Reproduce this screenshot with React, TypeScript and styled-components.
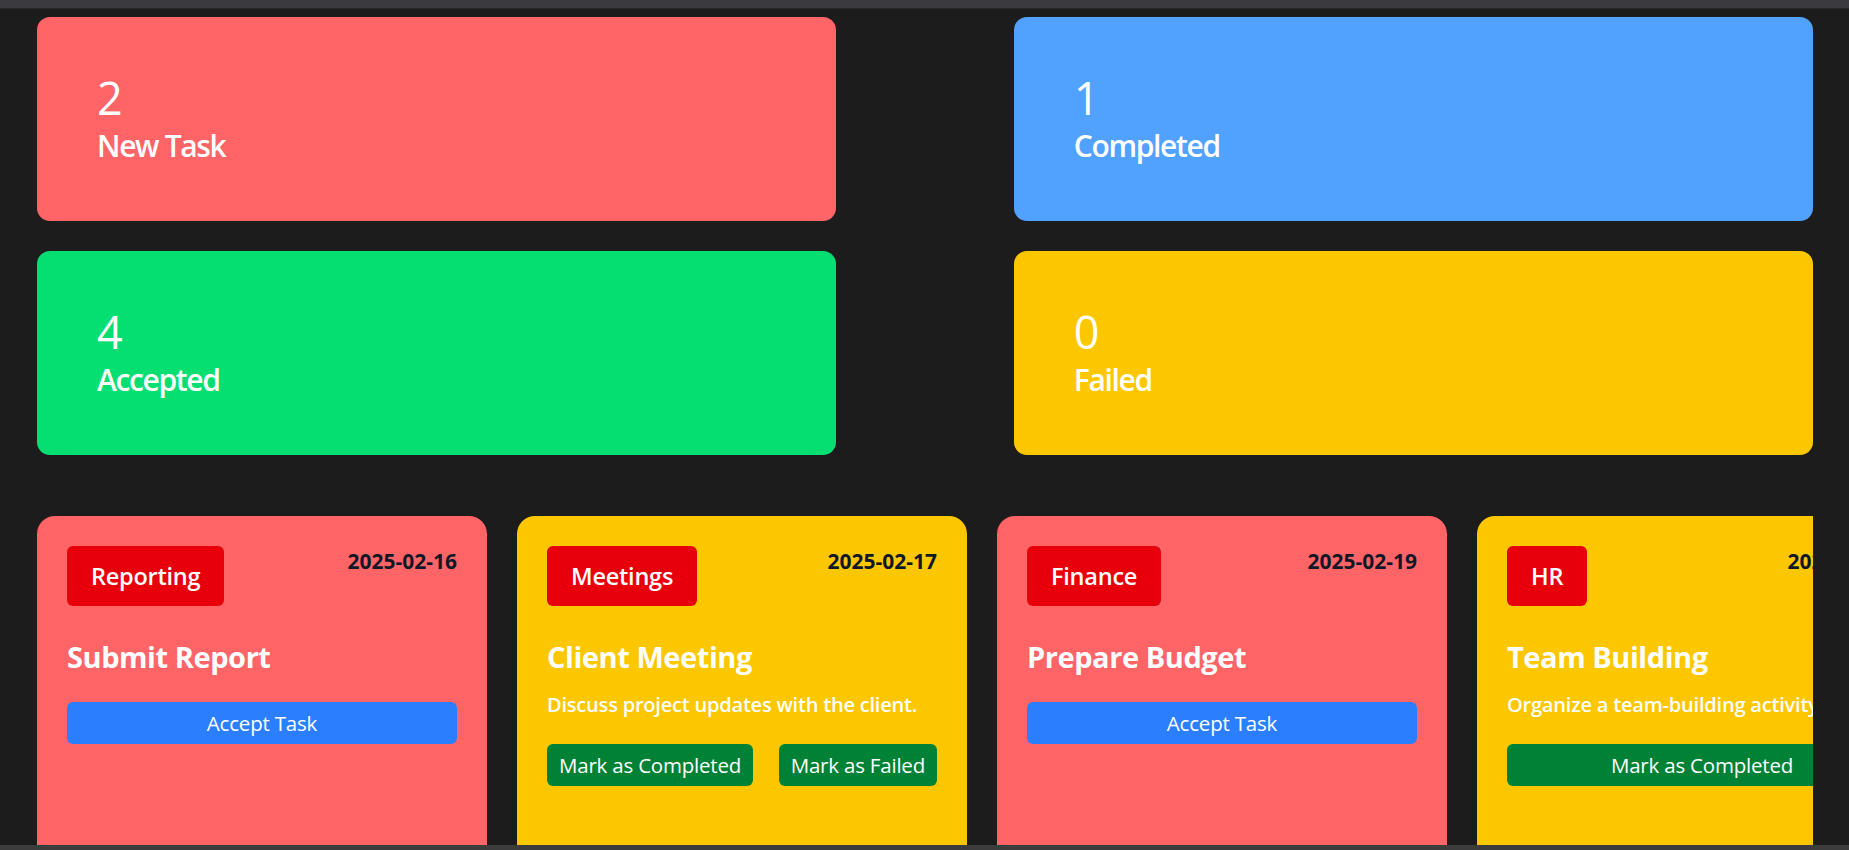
import React from "react";
import styled, { createGlobalStyle } from "styled-components";

const GlobalStyle = createGlobalStyle`
  html, body {
    margin: 0;
    padding: 0;
    background: #1c1c1c;
    font-family: "Open Sans", "Noto Sans", sans-serif;
  }
  * { box-sizing: border-box; }
`;

const Frame = styled.div`
  height: 850px;
  display: flex;
  flex-direction: column;
  overflow: hidden;
  background: #1c1c1c;
`;

const TopBar = styled.div`
  flex: 0 0 auto;
  height: 9px;
  background: #3a3a3f;
  border-bottom: 1px solid #27272b;
`;

const BottomBar = styled.div`
  flex: 0 0 auto;
  height: 5px;
  background: #3c3c3c;
`;

const Main = styled.main`
  flex: 1 1 auto;
  min-height: 0;
  overflow: hidden;
  padding: 7.5px 36px 0 37px;
`;

const StatsGrid = styled.section`
  display: flex;
  flex-wrap: wrap;
  justify-content: space-between;
  row-gap: 30px;
`;

const StatCard = styled.div<{ $bg: string }>`
  width: 45%;
  padding: 54px 60px;
  border-radius: 13px;
  background: ${(p) => p.$bg};
  color: #ffffff;
`;

const StatNumber = styled.div`
  font-size: 45px;
  line-height: 54px;
  font-weight: 400;
`;

const StatLabel = styled.div`
  font-size: 30px;
  line-height: 42px;
  font-weight: 600;
  letter-spacing: -0.045em;
`;

const TaskList = styled.section`
  margin-top: 61px;
  display: flex;
  gap: 30px;
  overflow: hidden;
  height: 600px;
`;

const TaskCard = styled.article<{ $bg: string }>`
  flex: 0 0 450px;
  height: 100%;
  padding: 30px;
  border-radius: 18px;
  background: ${(p) => p.$bg};
  color: #ffffff;
`;

const CardHeader = styled.div`
  display: flex;
  justify-content: space-between;
  align-items: flex-start;
`;

const Tag = styled.span`
  background: #e7000b;
  color: #ffffff;
  font-size: 23.5px;
  line-height: 36px;
  font-weight: 600;
  padding: 12px 24px;
  border-radius: 6px;
  letter-spacing: -0.01em;
`;

const DateText = styled.span`
  color: #101828;
  font-size: 21px;
  line-height: 30px;
  font-weight: 700;
`;

const Title = styled.h2`
  margin: 30px 0 0;
  font-size: 29px;
  line-height: 42px;
  font-weight: 700;
  letter-spacing: -0.015em;
`;

const Description = styled.p`
  margin: 12px 0 0;
  font-size: 20px;
  line-height: 30px;
  font-weight: 600;
  letter-spacing: -0.01em;
  white-space: nowrap;
`;

const ActionRow = styled.div`
  margin-top: 24px;
  display: flex;
  justify-content: space-between;
`;

const ActionButton = styled.button<{ $variant: "accept" | "done"; $full?: boolean }>`
  border: none;
  border-radius: 6px;
  padding: 6px 12px;
  font-family: inherit;
  font-size: 20.5px;
  line-height: 30px;
  font-weight: 400;
  letter-spacing: -0.01em;
  color: #ffffff;
  cursor: pointer;
  background: ${(p) => (p.$variant === "accept" ? "#2b7fff" : "#008236")};
  width: ${(p) => (p.$full ? "100%" : "auto")};
`;

const RED = "#ff6467";
const BLUE = "#51a2ff";
const GREEN = "#05df72";
const YELLOW = "#fdc700";

const stats = [
  { n: 2, label: "New Task", bg: RED },
  { n: 1, label: "Completed", bg: BLUE },
  { n: 4, label: "Accepted", bg: GREEN },
  { n: 0, label: "Failed", bg: YELLOW },
];

type Task = {
  tag: string;
  date: string;
  title: string;
  desc?: string;
  bg: string;
  kind: "new" | "active" | "single";
};

const tasks: Task[] = [
  { tag: "Reporting", date: "2025-02-16", title: "Submit Report", bg: RED, kind: "new" },
  {
    tag: "Meetings",
    date: "2025-02-17",
    title: "Client Meeting",
    desc: "Discuss project updates with the client.",
    bg: YELLOW,
    kind: "active",
  },
  { tag: "Finance", date: "2025-02-19", title: "Prepare Budget", bg: RED, kind: "new" },
  {
    tag: "HR",
    date: "2025-02-20",
    title: "Team Building",
    desc: "Organize a team-building activity.",
    bg: YELLOW,
    kind: "single",
  },
];

export default function App() {
  return (
    <>
      <GlobalStyle />
      <Frame>
        <TopBar />
        <Main>
          <StatsGrid>
            {stats.map((s) => (
              <StatCard key={s.label} $bg={s.bg}>
                <StatNumber>{s.n}</StatNumber>
                <StatLabel>{s.label}</StatLabel>
              </StatCard>
            ))}
          </StatsGrid>
          <TaskList>
            {tasks.map((t) => (
              <TaskCard key={t.title} $bg={t.bg}>
                <CardHeader>
                  <Tag>{t.tag}</Tag>
                  <DateText>{t.date}</DateText>
                </CardHeader>
                <Title>{t.title}</Title>
                {t.desc && <Description>{t.desc}</Description>}
                <ActionRow>
                  {t.kind === "new" && (
                    <ActionButton $variant="accept" $full>
                      Accept Task
                    </ActionButton>
                  )}
                  {t.kind === "active" && (
                    <>
                      <ActionButton $variant="done">Mark as Completed</ActionButton>
                      <ActionButton $variant="done">Mark as Failed</ActionButton>
                    </>
                  )}
                  {t.kind === "single" && (
                    <ActionButton $variant="done" $full>
                      Mark as Completed
                    </ActionButton>
                  )}
                </ActionRow>
              </TaskCard>
            ))}
          </TaskList>
        </Main>
        <BottomBar />
      </Frame>
    </>
  );
}
